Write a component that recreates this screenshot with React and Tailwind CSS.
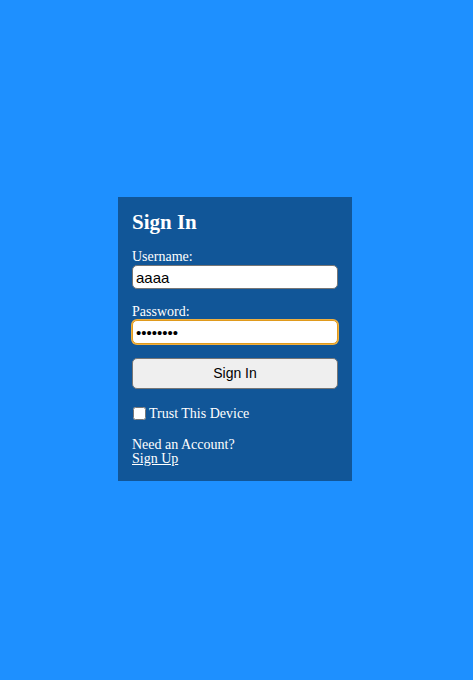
export default function App() {
  return (
    <div className="min-h-[680px] w-full bg-[#1e90ff] pt-[197px]">
      <div className="ml-[118px] w-[234px] h-[284px] bg-[#115698] px-[14px] pt-[13px] text-white font-['Liberation_Serif',serif]">
        <h2 className="text-[21px] font-bold leading-[24px]">Sign In</h2>
        <label className="block mt-[15px] text-[14px] leading-[16px]">Username:</label>
        <input
          type="text"
          defaultValue="aaaa"
          className="block w-[206px] h-[24px] px-[3px] rounded-[5px] border border-[#767676] bg-white text-black text-[15px] font-['Liberation_Sans',sans-serif] outline-none"
        />
        <label className="block mt-[14px] text-[14px] leading-[17px]">Password:</label>
        <input
          type="password"
          defaultValue="password"
          className="block w-[206px] h-[24px] px-[3px] rounded-[5px] border border-[#e09a1c] ring-1 ring-[#f0b040] bg-white text-black text-[15px] font-['Liberation_Sans',sans-serif] outline-none"
        />
        <button className="block w-[206px] h-[31px] mt-[14px] rounded-[5px] border border-[#767676] bg-[#efefef] text-black text-[14px] font-['Liberation_Sans',sans-serif]">
          Sign In
        </button>
        <div className="flex items-center mt-[16px] text-[14px] leading-[17px]">
          <input type="checkbox" className="w-[13px] h-[13px] ml-[1px] mr-[3px]" />
          <span>Trust This Device</span>
        </div>
        <div className="mt-[15px] text-[14px] leading-[16px]">Need an Account?</div>
        <a href="#" className="block -mt-[2px] text-[14px] leading-[16px] underline">Sign Up</a>
      </div>
    </div>
  );
}
